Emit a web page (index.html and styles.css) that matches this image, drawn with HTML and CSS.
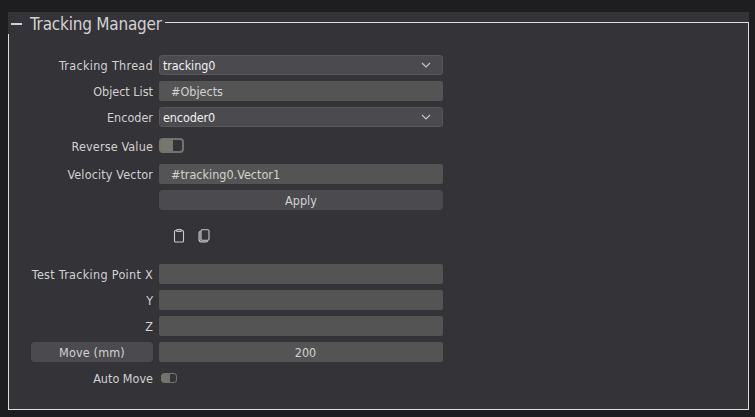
FILE: index.html
```html
<!DOCTYPE html>
<html lang="en">
<head>
<meta charset="utf-8">
<title>Tracking Manager</title>
<link rel="stylesheet" href="styles.css">
</head>
<body>
<main class="panel">
  <header class="head"><span class="collapse"></span><h1>Tracking Manager</h1><span class="rule"></span></header>
  <div class="body">
    <div class="row"><label class="wide">Tracking Thread</label><div class="select"><span>tracking0</span><svg width="10" height="6" viewBox="0 0 10 6"><path d="M1 1l4 4 4-4"/></svg></div></div>
    <div class="row"><label>Object List</label><div class="field">#Objects</div></div>
    <div class="row"><label>Encoder</label><div class="select"><span>encoder0</span><svg width="10" height="6" viewBox="0 0 10 6"><path d="M1 1l4 4 4-4"/></svg></div></div>
    <div class="row reverse"><label class="medium">Reverse Value</label><span class="toggle"></span></div>
    <div class="row"><label class="medium">Velocity Vector</label><div class="field">#tracking0.Vector1</div></div>
    <div class="row"><span></span><div class="button">Apply</div></div>
    <div class="icons">
      <svg width="12" height="14" viewBox="0 0 12 14"><path d="M3.500 1.500h-1a1 1 0 0 0-1 1v9.500a1 1 0 0 0 1 1h7a1 1 0 0 0 1-1V2.500a1 1 0 0 0-1-1h-1"/><path d="M4 .6h4L8.500 1.500 8 2.500H4L3.500 1.500z"/></svg>
      <svg width="12" height="14" viewBox="0 0 12 14"><path class="shade" d="M2 3v7.500q0 1.800 1.500 1.800h5"/><rect x="3" y=".7" width="8" height="10.500" rx="1.200"/><path d="M2.500 2.200Q1 2.500 1 4v6.500Q1 13 3.500 13H8q1.500 0 1.800-1.500"/></svg>
    </div>
    <div class="row"><label class="wide">Test Tracking Point X</label><div class="field"></div></div>
    <div class="row"><label>Y</label><div class="field"></div></div>
    <div class="row"><label>Z</label><div class="field"></div></div>
    <div class="row"><div class="button move">Move (mm)</div><div class="field value">200</div></div>
    <div class="row"><label>Auto Move</label><span class="toggle small"></span></div>
  </div>
</main>
</body>
</html>
```
FILE: styles.css
```css
* { box-sizing: border-box; }
body {
  margin: 0;
  height: 417px;
  padding: 12px 6px 7px 8px;
  overflow: hidden;
  background: #1e1e20;
  color: #d2d2d2;
  font: 12.5px/20px "DejaVu Sans Condensed", "DejaVu Sans", sans-serif;
  font-stretch: condensed;
}
.panel { height: 398px; background: #343337; }
.head { display: flex; height: 22px; padding-left: 3px; }
.collapse { width: 11px; height: 2px; margin-top: 11px; background: #d2d2d2; }
h1 {
  width: 132px;
  margin: 1px 3px 0 8px;
  font-size: 17px;
  font-weight: 400;
  line-height: 22px;
  letter-spacing: -0.22px;
  white-space: nowrap;
}
.rule { flex: 1; height: 12px; margin-top: 10px; border-top: 1px solid #dedede; border-right: 1px solid #dedede; }
.body {
  display: flex;
  flex-direction: column;
  gap: 6px;
  height: 376px;
  padding: 21px 0 0 22px;
  border: 1px solid #dedede;
  border-top: 0;
}
.row {
  display: grid;
  grid-template-columns: 122px 284px;
  grid-template-rows: 100%;
  column-gap: 6px;
  height: 20px;
  align-items: center;
}
label { height: 20px; padding-top: 1px; text-align: right; white-space: nowrap; }
.wide { letter-spacing: 0.3px; }
.medium { letter-spacing: 0.15px; }
.field, .select, .button { height: 20px; border-radius: 2px; white-space: nowrap; }
.field, .button { padding-top: 1px; }
.field { padding-left: 12px; background: #545454; }
.value { padding: 1px 0 0 9px; text-align: center; }
.select {
  display: flex;
  align-items: center;
  justify-content: space-between;
  padding: 0 11px 0 3px;
  background: #4b4a4e;
  border: 1px solid #575659;
  border-radius: 3px;
  color: #f0f0f0;
}
.select span { height: 20px; padding-top: 1px; letter-spacing: -0.1px; }
.button { background: #4b4a4e; border-radius: 4px; text-align: center; }
.move { letter-spacing: 0.15px; }
.reverse { height: 25px; }
.toggle {
  width: 25px;
  height: 15px;
  border: 2px solid #73736d;
  border-radius: 4px;
  background: linear-gradient(90deg, #777770 12px, #343337 12px);
}
.small { width: 16px; height: 10px; margin-left: 2px; border-width: 1px; border-radius: 3px; background: linear-gradient(90deg, #73736d 8px, #343337 8px); }
.icons { display: flex; gap: 13px; height: 42px; padding: 13px 0 0 142px; }
svg { display: block; fill: none; stroke: #c8c8c8; stroke-width: 1.1; }
.shade { stroke: #89898b; }
```
